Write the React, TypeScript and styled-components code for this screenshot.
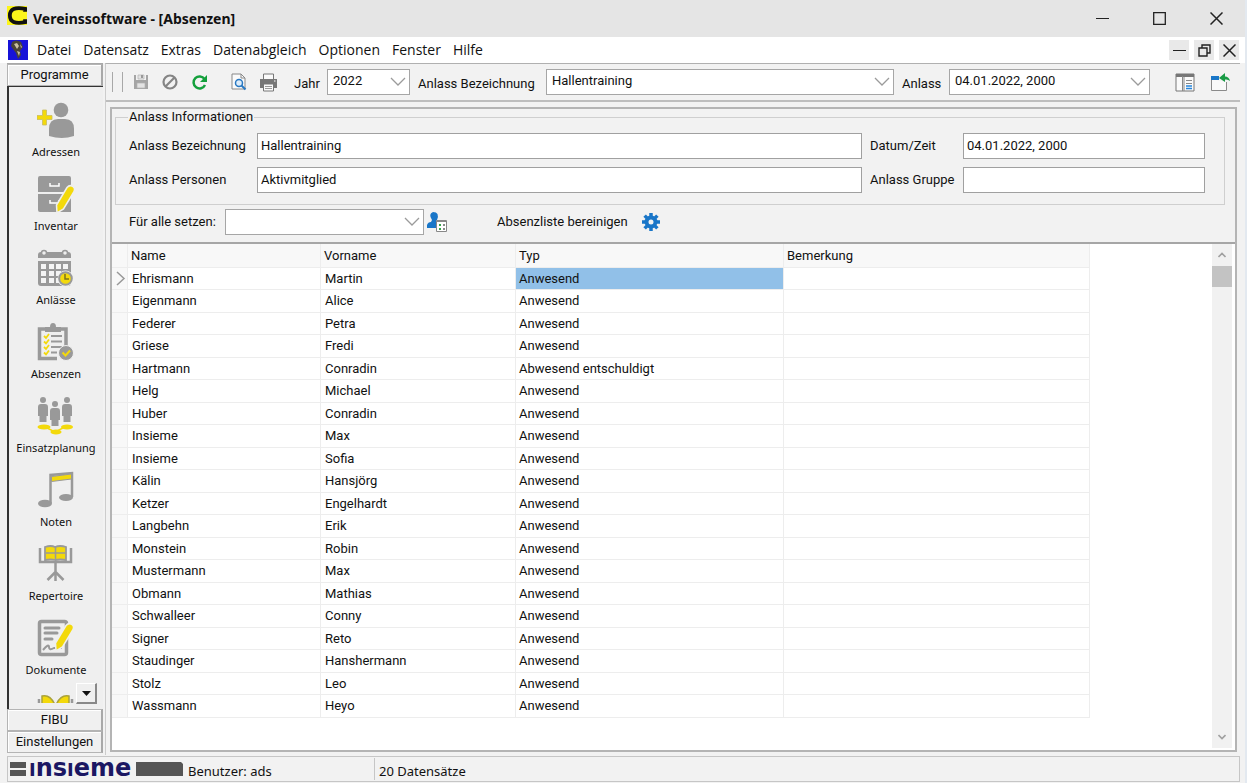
import React from 'react';
import styled, { createGlobalStyle } from 'styled-components';

const GlobalStyle = createGlobalStyle`
  *, *::before, *::after { box-sizing: border-box; }
  body { margin: 0; background: #f2f2f2; }
  button, input, select { font: inherit; color: inherit; margin: 0; border-radius: 0; }
  button { padding: 0; border: 0; background: none; }
`;

const ui = `"Open Sans", "Noto Sans", sans-serif`;
const wide = `"Noto Sans", "Open Sans", sans-serif`;
const form = `Roboto, "Liberation Sans", sans-serif`;

const Window = styled.div`
  display: flex;
  flex-direction: column;
  height: 100vh;
  background: #f2f2f2;
  border-right: 2px solid #e3e9f0;
  color: #111;
  font: 13px/16px ${form};
`;

const TitleBar = styled.header`
  display: flex;
  align-items: center;
  flex: none;
  height: 37px;
  padding-left: 7px;
  background: #e5e5e5;
`;

const AppIcon = styled.svg`
  align-self: flex-start;
  margin-top: 5px;
`;

const Title = styled.h1`
  flex: 1;
  margin: 0 0 0 6px;
  font: 700 14px/20px ${wide};
`;

const WindowButton = styled.button`
  display: grid;
  place-items: center;
  width: 57px;
  height: 34px;
`;

const MenuBar = styled.nav`
  display: flex;
  align-items: center;
  flex: none;
  height: 26px;
  padding: 0 6px 0 8px;
  background: #fff;
  font: 14px/20px ${ui};
`;

const Menus = styled.div`
  display: flex;
  flex: 1;
  gap: 12px;
  margin-left: 9px;
`;

const MdiButton = styled.button`
  display: grid;
  place-items: center;
  width: 20px;
  height: 20px;
  margin-left: 5px;
  background: #e9e9e9;
`;

const Body = styled.div`
  display: flex;
  flex: 1;
  min-height: 0;
  margin: 0 5px 0 7px;
`;

const Sidebar = styled.aside`
  display: flex;
  flex-direction: column;
  flex: none;
  width: 96px;
  margin-bottom: 2px;
  border-top: 1px solid #a8a8a8;
`;

const GroupButton = styled.button`
  flex: none;
  height: 22px;
  border: 1px solid #b4b4b4;
  border-right: 2px solid #a8a8a8;
  background: #f0f0f0;
  box-shadow: inset 1px 1px #fff;
`;

const ModuleArea = styled.div`
  position: relative;
  flex: 1;
  min-height: 0;
  overflow: hidden;
  padding-top: 14px;
  border-top: 1px solid #333;
  border-left: 2px solid #333;
  background: #efefef;
`;

const Module = styled.button`
  display: flex;
  flex-direction: column;
  align-items: center;
  gap: 6px;
  width: 100%;
  height: 74px;
  font: 11px/14px ${wide};
`;

const ScrollDown = styled.button`
  position: absolute;
  right: 6px;
  bottom: 5px;
  display: grid;
  place-items: center;
  width: 21px;
  height: 21px;
  background: #efefef;
  border: 1px solid #fff;
  border-right: 2px solid #888;
  border-bottom: 2px solid #888;
`;

const Workspace = styled.main`
  display: flex;
  flex: 1;
  flex-direction: column;
  min-width: 0;
  margin-left: 2px;
  border-top: 1px solid #b0b0b0;
  border-left: 1px solid #ccc;
`;

const Toolbar = styled.div`
  display: flex;
  align-items: center;
  flex: none;
  height: 38px;
  padding: 0 10px 0 6px;
  border-bottom: 2px solid #bdbdbd;
`;

const Grip = styled.div`
  width: 11px;
  height: 20px;
  margin-right: 8px;
  border: 1px solid #a8a8a8;
  border-width: 0 1px;
`;

const ToolButton = styled.button<{ $gap?: number }>`
  display: grid;
  place-items: center;
  width: 20px;
  height: 24px;
  margin-right: ${(p) => p.$gap ?? 9}px;
`;

const ToolEnd = styled.div`
  display: flex;
  flex: none;
  margin-left: 25px;
`;

const ToolLabel = styled.label<{ $width?: number }>`
  min-width: ${(p) => p.$width ?? 0}px;
  margin: 4px 7px 0 8px;
  white-space: nowrap;
`;

const Combo = styled.div<{ $width?: number }>`
  position: relative;
  ${(p) => (p.$width ? `flex: none; width: ${p.$width}px;` : 'flex: 1; min-width: 0;')}
`;

const Select = styled.select`
  display: block;
  width: 100%;
  height: 26px;
  padding: 0 24px 2px 5px;
  appearance: none;
  border: 1px solid #a6a6a6;
  outline: 0;
  background: #fff;
  text-indent: 0;
`;

const Chevron = styled.svg`
  position: absolute;
  right: 4px;
  top: 8px;
  pointer-events: none;
`;

const Panel = styled.section`
  display: flex;
  flex: 1;
  flex-direction: column;
  min-height: 0;
  margin: 5px 3px 3px 4px;
  border: 2px solid #b4b4b4;
`;

const Info = styled.fieldset`
  display: grid;
  grid-template-columns: 128px 1fr 101px 242px;
  row-gap: 8px;
  align-items: center;
  min-width: 0;
  margin: 0 10px 0 3px;
  padding: 8px 19px 11px 13px;
  border: 1px solid #cfcfcf;
`;

const Legend = styled.legend`
  margin-left: -1px;
  padding: 0 1px;
`;

const FieldLabel = styled.label`
  white-space: nowrap;
  &:nth-of-type(even) { padding-left: 8px; }
`;

const Field = styled.input`
  min-width: 0;
  width: 100%;
  height: 26px;
  padding: 0 3px 2px;
  border: 1px solid #a0a0a0;
  outline: 0;
  background: #fff;
`;

const Actions = styled.div`
  display: flex;
  align-items: center;
  flex: none;
  height: 37px;
  padding: 0 0 3px 17px;
`;

const ActionLabel = styled.label`
  width: 96px;
  white-space: nowrap;
`;

const AssignButton = styled.button`
  display: grid;
  width: 22px;
  height: 22px;
  margin: 0 49px 0 2px;
`;

const CleanButton = styled.button`
  display: flex;
  align-items: center;
  gap: 14px;
`;

const GridArea = styled.div`
  display: flex;
  flex: 1;
  min-height: 0;
  border-top: 2px solid #a6a6a6;
  background: #fff;
`;

const TableWrap = styled.div`
  flex: 1;
  min-width: 0;
  overflow: hidden;
`;

const Table = styled.table`
  width: 978px;
  table-layout: fixed;
  border-collapse: separate;
  border-spacing: 0;

  th, td {
    height: 22px;
    padding: 0 0 0 4px;
    border-right: 1px solid #ededed;
    border-bottom: 1px solid #ededed;
    font-weight: 400;
    line-height: 20px;
    text-align: left;
    white-space: nowrap;
  }
  th { height: 24px; padding-left: 3px; background: #f8f8f8; }
  tbody tr:nth-child(even) td { height: 23px; }
  td:first-child { padding: 0; background: #f8f8f8; }
  td:nth-child(4) { padding-left: 3px; }
`;

const Cell = styled.td<{ $selected?: boolean }>`
  background: ${(p) => (p.$selected ? '#91c0e8' : '#fff')};
`;

const Scrollbar = styled.div`
  display: flex;
  flex: none;
  flex-direction: column;
  justify-content: space-between;
  width: 20px;
  margin: 0 3px 2px 0;
  background: #f1f1f1;
`;

const ScrollArrow = styled.button`
  display: grid;
  place-items: center;
  width: 20px;
  height: 22px;
`;

const Thumb = styled.div`
  height: 21px;
  margin-bottom: auto;
  background: #c3c3c3;
`;

const StatusBar = styled.footer`
  display: flex;
  align-items: center;
  flex: none;
  height: 26px;
  margin: 1px 5px 1px 7px;
  border: 1px solid #c6c6c6;
  font: 13px/18px ${wide};
`;

const Brand = styled.div`
  display: flex;
  align-items: center;
  width: 180px;
  height: 24px;
  padding-left: 2px;
`;

const BrandText = styled.span`
  flex: none;
  width: 107px;
  margin-left: 3px;
  color: #1b1763;
  font: 700 24px/20px "DejaVu Sans", sans-serif;
  white-space: nowrap;
`;

const BrandCap = styled.span`
  font-size: 18px;
`;

const Status = styled.span<{ $divided?: boolean }>`
  width: 186px;
  padding: 4px 0 0 ${(p) => (p.$divided ? 4 : 0)}px;
  border-left: ${(p) => (p.$divided ? '1px solid #c6c6c6' : '0')};
  white-space: nowrap;
`;

const G = '#999';
const Y = '#f3d90b';

const Pencil = () => (
  <path d="M30 12.500q3-3.500 6.500-.5 2 2 0 5.500L26.500 34l-6.500 4-.5-8z" fill={Y} stroke="#efefef" strokeWidth="1.500" />
);

const icons: Record<string, React.ReactNode> = {
  Adressen: (
    <>
      <path d="M5.500 9h4v5.500H15v4H9.500V24h-4v-5.500H0v-4h5.500z" fill={Y} stroke="#c9bd62" strokeWidth=".8" />
      <circle cx="24" cy="9" r="7.300" fill={G} />
      <path d="M12 35V28q0-10 9-10h7q9 0 9 10v7q-12 4-25 0z" fill={G} />
    </>
  ),
  Inventar: (
    <>
      <path d="M1 17V3q0-2 2-2h29q2 0 2 2v14zM1 19h33v18H3q-2 0-2-2z" fill={G} />
      <path d="M13 8v3h9V8M13 25v3h9v-3" fill="none" stroke="#fff" strokeWidth="1.500" />
      <Pencil />
    </>
  ),
  'Anlässe': (
    <>
      <path d="M1 9V6q0-3 3-3h27q3 0 3 3v3zM1 12h33v22q0 3-3 3H4q-3 0-3-3z" fill={G} />
      <circle cx="7" cy="4" r="2.500" fill="#efefef" stroke={G} strokeWidth="1.500" />
      <circle cx="28" cy="4" r="2.500" fill="#efefef" stroke={G} strokeWidth="1.500" />
      {[15, 22, 29].map((y) =>
        [4, 12, 19, 26].map((x) => <rect key={`${x}-${y}`} x={x} y={y} width="5" height="5" fill="#f4f4f4" />),
      )}
      <circle cx="28.500" cy="29.500" r="8" fill="#efefef" />
      <circle cx="28.500" cy="29.500" r="6.300" fill={Y} stroke={G} strokeWidth="2" />
      <path d="M28 25v5h4" fill="none" stroke="#7b711c" strokeWidth="1.500" />
    </>
  ),
  Absenzen: (
    <>
      <path d="M20 35.500H2.500V6H29v18" fill="none" stroke={G} strokeWidth="3.500" />
      <path d="M8 9V4h5q0-4 3-4t3 4h5v5z" fill={G} />
      {[13, 18.500, 24, 29.500].map((y) => (
        <g key={y} fill="none">
          <path d={`M7 ${y}l2 2 3-4`} stroke={Y} strokeWidth="1.800" />
          <path d={`M14 ${y}h${y > 25 ? 6 : 11}`} stroke={G} strokeWidth="2" />
        </g>
      ))}
      <circle cx="29" cy="30" r="7.500" fill={G} stroke="#efefef" strokeWidth="1" />
      <path d="M25.500 29.500l3 3 4.500-5" fill="none" stroke={Y} strokeWidth="2" />
    </>
  ),
  Einsatzplanung: (
    <>
      <path d="M6 29l12 6 12-6" fill="none" stroke={Y} strokeWidth="1.500" />
      <g fill={Y}>
        <ellipse cx="7" cy="30" rx="6.500" ry="2.500" />
        <ellipse cx="19" cy="35" rx="5.500" ry="2.500" />
        <ellipse cx="30" cy="30" rx="6" ry="2.500" />
      </g>
      {[[6, 3], [18, 7], [30, 3]].map(([x, y]) => (
        <g key={x} fill={G}>
          <circle cx={x} cy={y} r="3" />
          <path d={`M${x - 5} ${y + 7}q0-3 3-3h4q3 0 3 3v9h-1.500v6h-7v-6h-1.500z`} />
        </g>
      ))}
    </>
  ),
  Noten: (
    <>
      <path d="M13.500 32V4L35 2v24" fill="none" stroke={G} strokeWidth="2.500" />
      <path d="M14.500 5.500l20-2.500v5l-20 2.500z" fill={Y} stroke={G} strokeWidth="1" />
      <ellipse cx="8" cy="32.500" rx="7" ry="3.800" fill={G} />
      <ellipse cx="29" cy="26.500" rx="7" ry="3.500" fill={G} />
    </>
  ),
  Repertoire: (
    <>
      <path d="M3 3v14h31V3M18.500 17v19M18.500 27l-8 8M18.500 27l8 8" fill="none" stroke={G} strokeWidth="2.500" />
      <path d="M8 2q6-2 10 0 5-2 11 0v13q-6-1-11 0-4-1-10 0z" fill={Y} stroke={G} strokeWidth="1.800" />
      <path d="M18.500 2v13M9 8h19" stroke={G} strokeWidth="1.500" />
    </>
  ),
  Dokumente: (
    <>
      <rect x="2.500" y="2.500" width="27" height="33" rx="2" fill="none" stroke={G} strokeWidth="3.500" />
      <path d="M8 9h14M8 14h12M8 20h7" stroke={G} strokeWidth="3" strokeLinecap="round" />
      <path d="M6 31q6-7 6-3t5 1h8" fill="none" stroke={G} strokeWidth="2" />
      <g transform="translate(-1 -6)"><Pencil /></g>
    </>
  ),
  Bibliothek: (
    <>
      <path d="M2 6v5M35 6v5" stroke={G} strokeWidth="2.500" />
      <path d="M17.500 11Q13 1 5 3v8zM19.500 11Q24 1 32 3v8z" fill={Y} stroke="#aaa23b" strokeWidth="1.500" />
    </>
  ),
};

const rows: [string, string, string?][] = [
  ['Ehrismann', 'Martin'],
  ['Eigenmann', 'Alice'],
  ['Federer', 'Petra'],
  ['Griese', 'Fredi'],
  ['Hartmann', 'Conradin', 'Abwesend entschuldigt'],
  ['Helg', 'Michael'],
  ['Huber', 'Conradin'],
  ['Insieme', 'Max'],
  ['Insieme', 'Sofia'],
  ['Kälin', 'Hansjörg'],
  ['Ketzer', 'Engelhardt'],
  ['Langbehn', 'Erik'],
  ['Monstein', 'Robin'],
  ['Mustermann', 'Max'],
  ['Obmann', 'Mathias'],
  ['Schwalleer', 'Conny'],
  ['Signer', 'Reto'],
  ['Staudinger', 'Hanshermann'],
  ['Stolz', 'Leo'],
  ['Wassmann', 'Heyo'],
];

const ComboBox = ({ id, value, width }: { id: string; value: string; width?: number }) => (
  <Combo $width={width}>
    <Select id={id} defaultValue={value}>
      <option value={value}>{value}</option>
    </Select>
    <Chevron width="16" height="9" viewBox="0 0 16 9" fill="none" stroke="#9b9b9b" strokeWidth="1.300">
      <path d="M1 1l7 7 7-7" />
    </Chevron>
  </Combo>
);

const Cross = () => (
  <svg width="13" height="13" viewBox="0 0 13 13" stroke="#222" strokeWidth="1.500"><path d="M.5.500l12 12M12.500.500l-12 12" /></svg>
);

const Minus = () => (
  <svg width="13" height="13" viewBox="0 0 13 13" stroke="#222"><path d="M0 6.500h13" /></svg>
);

export default function App() {
  return (
    <>
      <GlobalStyle />
      <Window>
        <TitleBar>
          <AppIcon width="20" height="21" viewBox="0 0 21 22">
            <path d="M0 1h21v20H0z" fill="#fcf51a" />
            <path d="M19 7V4Q3 1 3 11t16 7v-3" fill="none" stroke="#111" strokeWidth="4" />
          </AppIcon>
          <Title>Vereinssoftware - [Absenzen]</Title>
          <WindowButton aria-label="Minimieren"><Minus /></WindowButton>
          <WindowButton aria-label="Maximieren">
            <svg width="13" height="13" viewBox="0 0 13 13" fill="none" stroke="#222" strokeWidth="1.300"><path d="M.7.700h11.600v11.600H.7z" /></svg>
          </WindowButton>
          <WindowButton aria-label="Schliessen"><Cross /></WindowButton>
        </TitleBar>

        <MenuBar>
          <svg width="20" height="20" viewBox="0 0 20 20">
            <path d="M0 0h20v20H0z" fill="#1713d8" />
            <path d="M4 2q4-3 9 0l2 5-3 4 1 4-3 4-2-6-3-4-2-3z" fill="#4a4338" />
            <path d="M6 4l3-1 2 3-2 3zM9 11l3 1-1 4zM12 4l2 3-1 1z" fill="#c9c0a4" />
          </svg>
          <Menus>
            {['Datei', 'Datensatz', 'Extras', 'Datenabgleich', 'Optionen', 'Fenster', 'Hilfe'].map((m) => (
              <button key={m}>{m}</button>
            ))}
          </Menus>
          <MdiButton aria-label="Dokument minimieren"><Minus /></MdiButton>
          <MdiButton aria-label="Dokument wiederherstellen">
            <svg width="13" height="13" viewBox="0 0 13 13" fill="none" stroke="#222" strokeWidth="1.400"><path d="M1 4h8v8H1zM4 4V1h8v8H9" /></svg>
          </MdiButton>
          <MdiButton aria-label="Dokument schliessen"><Cross /></MdiButton>
        </MenuBar>

        <Body>
          <Sidebar>
            <GroupButton>Programme</GroupButton>
            <ModuleArea>
              {Object.entries(icons).map(([name, icon]) => {
                const cut = name === 'Bibliothek';
                return (
                  <Module key={name} aria-label={name}>
                    <svg width="38" height={cut ? 10 : 38} viewBox={cut ? '0 0 38 10' : '0 0 38 38'}>{icon}</svg>
                    {!cut && <span>{name}</span>}
                  </Module>
                );
              })}
              <ScrollDown aria-label="Nach unten">
                <svg width="9" height="5" viewBox="0 0 9 5"><path d="M0 0h9L4.500 5z" fill="#111" /></svg>
              </ScrollDown>
            </ModuleArea>
            <GroupButton>FIBU</GroupButton>
            <GroupButton>Einstellungen</GroupButton>
          </Sidebar>

          <Workspace>
            <Toolbar>
              <Grip />
              <ToolButton aria-label="Speichern">
                <svg width="16" height="16" viewBox="0 0 16 16">
                  <path d="M1 1h2v5h10V1h2v14H1z" fill="#a5a5a5" />
                  <path d="M5 1h6v4H5zM4 9h8v5H4z" fill="#e3e3e3" stroke="#b1b1b1" strokeWidth=".7" />
                  <path d="M8 1h2v3H8z" fill="#999" />
                </svg>
              </ToolButton>
              <ToolButton aria-label="Abbrechen">
                <svg width="16" height="16" viewBox="0 0 16 16" fill="none" stroke="#858585" strokeWidth="2.200"><circle cx="8" cy="8" r="6.500" /><path d="M12.500 3.500l-9 9" /></svg>
              </ToolButton>
              <ToolButton aria-label="Aktualisieren" $gap={20}>
                <svg width="17" height="17" viewBox="0 0 17 17"><path d="M13.500 5A6 6 0 1 0 14 11" fill="none" stroke="#14a03c" strokeWidth="2.500" /><path d="M16 1v7H9z" fill="#14a03c" /></svg>
              </ToolButton>
              <ToolButton aria-label="Vorschau">
                <svg width="16" height="18" viewBox="0 0 16 18" fill="none">
                  <path d="M1 1h9l4 4v11H1z" fill="#fafafa" stroke="#888" /><path d="M10 1v4h4" stroke="#888" />
                  <circle cx="8" cy="10" r="3.500" fill="#ddecf9" stroke="#2878c2" strokeWidth="1.500" /><path d="M10.500 12.500l4 4" stroke="#2878c2" strokeWidth="2" />
                </svg>
              </ToolButton>
              <ToolButton aria-label="Drucken" $gap={8}>
                <svg width="19" height="19" viewBox="0 0 19 19">
                  <path d="M4.500 6V1h10v5" fill="#fafafa" stroke="#777" /><path d="M1 6h17v9H1z" fill="#777" />
                  <path d="M4.500 11h10v7h-10z" fill="#fafafa" stroke="#777" /><path d="M6 13.500h7M6 15.500h7" stroke="#999" /><path d="M15 8h1.500" stroke="#fff" />
                </svg>
              </ToolButton>
              <ToolLabel htmlFor="jahr" $width={26}>Jahr</ToolLabel>
              <ComboBox id="jahr" value="2022" width={83} />
              <ToolLabel htmlFor="anlass-bez" $width={121}>Anlass Bezeichnung</ToolLabel>
              <ComboBox id="anlass-bez" value="Hallentraining" />
              <ToolLabel htmlFor="anlass" $width={40}>Anlass</ToolLabel>
              <ComboBox id="anlass" value="04.01.2022, 2000" width={201} />
              <ToolEnd>
                <ToolButton aria-label="Detailansicht" $gap={15}>
                  <svg width="20" height="19" viewBox="0 0 20 19" fill="none">
                    <path d="M1 1h18v17H1z" fill="#fafafa" stroke="#777" /><path d="M1 2.500h18" stroke="#777" strokeWidth="3" />
                    <path d="M7.500 3v15M9 4v14" stroke="#888" /><path d="M11 7.500h6M11 10.500h6" stroke="#888" /><path d="M11 13h6M11 15.500h6" stroke="#2585dc" strokeWidth="1.500" />
                  </svg>
                </ToolButton>
                <ToolButton aria-label="Fenster verlassen" $gap={0}>
                  <svg width="20" height="19" viewBox="0 0 20 19" fill="none">
                    <path d="M1.500 6v11.500h15V9" fill="#fafafa" stroke="#8a8a8a" /><path d="M1 5h8" stroke="#1976c8" strokeWidth="4" />
                    <path d="M9 5l6-5v3.500q4 0 5 4.500-2-2-5-1.500V9z" fill="#199b45" />
                  </svg>
                </ToolButton>
              </ToolEnd>
            </Toolbar>

            <Panel>
              <Info>
                <Legend>Anlass Informationen</Legend>
                <FieldLabel htmlFor="bez">Anlass Bezeichnung</FieldLabel>
                <Field id="bez" defaultValue="Hallentraining" />
                <FieldLabel htmlFor="datum">Datum/Zeit</FieldLabel>
                <Field id="datum" defaultValue="04.01.2022, 2000" />
                <FieldLabel htmlFor="personen">Anlass Personen</FieldLabel>
                <Field id="personen" defaultValue="Aktivmitglied" />
                <FieldLabel htmlFor="gruppe">Anlass Gruppe</FieldLabel>
                <Field id="gruppe" defaultValue="" />
              </Info>
              <Actions>
                <ActionLabel htmlFor="alle">Für alle setzen:</ActionLabel>
                <ComboBox id="alle" value="" width={199} />
                <AssignButton aria-label="Für alle übernehmen">
                  <svg width="22" height="22" viewBox="0 0 22 22" fill="none">
                    <path d="M1 17v-3q1-3 4-3l1-2Q2 3 7 1q7 0 4 8l-1 2 3 2v4z" fill="#1976c8" />
                    <path d="M10.500 9.500h10v11h-10z" fill="#fff" stroke="#888" /><path d="M11 10.500h9" stroke="#888" />
                    <path d="M13 13h2v2h-2zM13 17h2v2h-2z" fill="#37a34b" /><path d="M17 13h2v2h-2zM17 17h2v2h-2z" fill="#888" />
                  </svg>
                </AssignButton>
                <CleanButton>
                  Absenzliste bereinigen
                  <svg width="18" height="18" viewBox="-9 -9 18 18">
                    {[0, 45, 90, 135].map((a) => <path key={a} d="M0-9V9" stroke="#1976c8" strokeWidth="3.500" transform={`rotate(${a})`} />)}
                    <circle r="4.500" fill="#f2f2f2" stroke="#1976c8" strokeWidth="4" />
                  </svg>
                </CleanButton>
              </Actions>
              <GridArea>
                <TableWrap>
                  <Table>
                    <colgroup>
                      <col width="16" /><col width="193" /><col width="195" /><col width="268" /><col width="306" />
                    </colgroup>
                    <thead>
                      <tr><th /><th>Name</th><th>Vorname</th><th>Typ</th><th>Bemerkung</th></tr>
                    </thead>
                    <tbody>
                      {rows.map(([name, first, type = 'Anwesend'], i) => (
                        <tr key={i}>
                          <Cell>
                            {i === 0 && (
                              <svg width="15" height="15" viewBox="0 0 15 15" fill="none" stroke="#999" strokeWidth="1.500" display="block"><path d="M5 1l7 6.500L5 14" /></svg>
                            )}
                          </Cell>
                          <Cell>{name}</Cell>
                          <Cell>{first}</Cell>
                          <Cell $selected={i === 0}>{type}</Cell>
                          <Cell />
                        </tr>
                      ))}
                    </tbody>
                  </Table>
                </TableWrap>
                <Scrollbar>
                  <ScrollArrow aria-label="Nach oben blättern">
                    <svg width="8" height="6" viewBox="0 0 8 6" fill="none" stroke="#a0a0a0" strokeWidth="1.600"><path d="M.5 5L4 1.500 7.500 5" /></svg>
                  </ScrollArrow>
                  <Thumb />
                  <ScrollArrow aria-label="Nach unten blättern">
                    <svg width="8" height="6" viewBox="0 0 8 6" fill="none" stroke="#a0a0a0" strokeWidth="1.600"><path d="M.5 1L4 4.500 7.500 1" /></svg>
                  </ScrollArrow>
                </Scrollbar>
              </GridArea>
            </Panel>
          </Workspace>
        </Body>

        <StatusBar>
          <Brand>
            <svg width="16" height="14" viewBox="0 0 16 14"><path d="M0 0h16v6H0zM0 8h16v6H0z" fill="#555" /></svg>
            <BrandText><BrandCap>I</BrandCap>ns<BrandCap>I</BrandCap>eme</BrandText>
            <svg width="47" height="14" viewBox="0 0 47 14"><path d="M0 0h45l2 2v12H0z" fill="#555" /></svg>
          </Brand>
          <Status>Benutzer: ads</Status>
          <Status $divided>20 Datensätze</Status>
        </StatusBar>
      </Window>
    </>
  );
}
